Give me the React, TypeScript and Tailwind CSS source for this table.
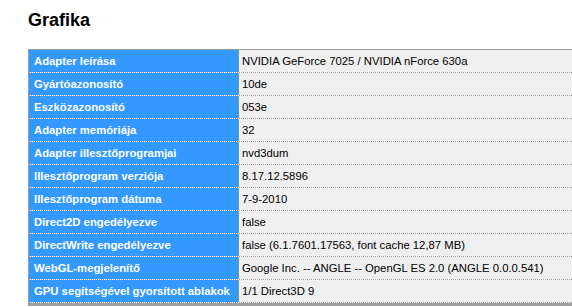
import React from "react";

const rows: [string, string][] = [
  ["Adapter leírása", "NVIDIA GeForce 7025 / NVIDIA nForce 630a"],
  ["Gyártóazonosító", "10de"],
  ["Eszközazonosító", "053e"],
  ["Adapter memóriája", "32"],
  ["Adapter illesztőprogramjai", "nvd3dum"],
  ["Illesztőprogram verziója", "8.17.12.5896"],
  ["Illesztőprogram dátuma", "7-9-2010"],
  ["Direct2D engedélyezve", "false"],
  ["DirectWrite engedélyezve", "false (6.1.7601.17563, font cache 12,87 MB)"],
  ["WebGL-megjelenítő", "Google Inc. -- ANGLE -- OpenGL ES 2.0 (ANGLE 0.0.0.541)"],
  ["GPU segítségével gyorsított ablakok", "1/1 Direct3D 9"],
];

const App: React.FC = () => {
  return (
    <div className="w-[572px] h-[307px] overflow-hidden bg-white font-['Liberation_Sans',sans-serif]">
      {/* TITLE */}
      <h1 className="pl-[28px] pt-[8px] h-[49px] text-[18px] leading-[24px] font-bold text-black">
        Grafika
      </h1>

      {/* TABLE */}
      <div className="ml-[28px] w-[560px] border-l border-t border-[#9a9a9a] border-t-dotted">
        {rows.map(([label, value], idx) => (
          <div
            key={idx}
            className="flex h-[23px] border-b border-dotted border-[#9a9a9a] last:border-b-0"
          >
            <div className="w-[210px] shrink-0 bg-[#3399ff] text-white font-bold text-[11.3px] leading-[22px] pl-[5px] whitespace-nowrap overflow-hidden border-r border-dotted border-[#9a9a9a]">
              {label}
            </div>
            <div className="flex-1 bg-[#efefef] text-black text-[11.3px] leading-[22px] pl-[3px] whitespace-nowrap">
              {value}
            </div>
          </div>
        ))}
        <div className="h-[3px] bg-[#a0a0a0]" />
      </div>
    </div>
  );
};

export default App;
